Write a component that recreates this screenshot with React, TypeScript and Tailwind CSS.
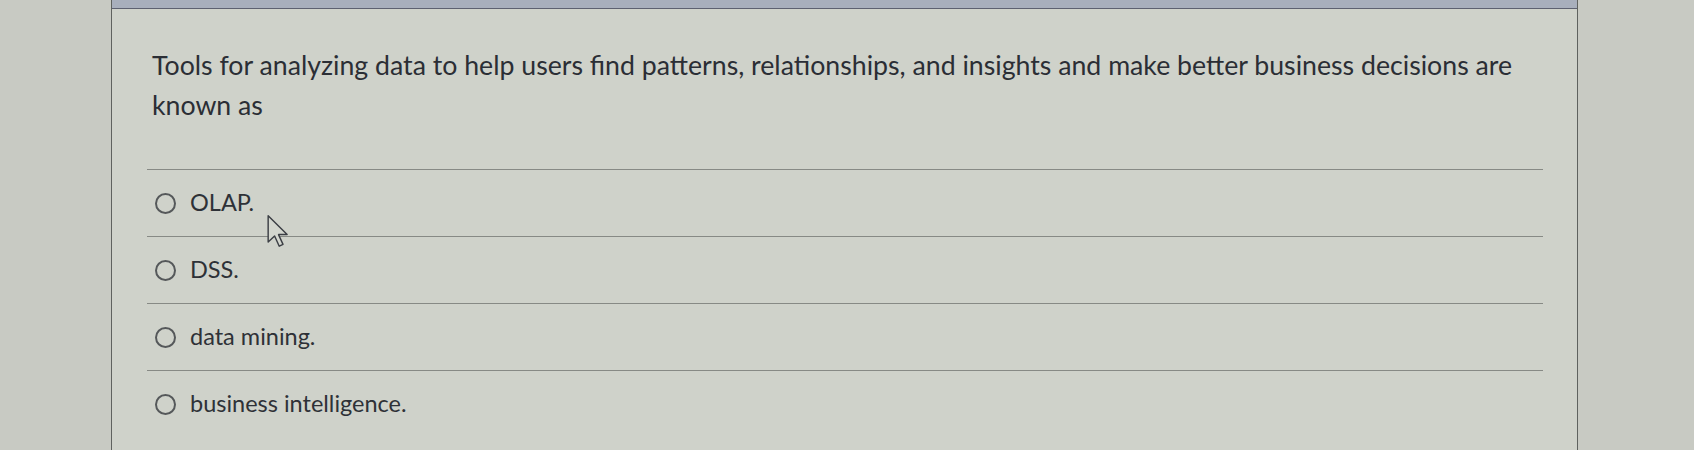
import React from "react";

const options = ["OLAP.", "DSS.", "data mining.", "business intelligence."];

const Cursor: React.FC = () => (
  <svg
    className="pointer-events-none absolute left-[266px] top-[214px]"
    width="24"
    height="34"
    viewBox="0 0 13 19"
    aria-hidden="true"
  >
    <path
      d="M1 1 L1 15.6 L4.6 12.3 L7.2 18 L9.3 17 L6.8 11.5 L11.6 11.5 Z"
      fill="#d3d6ce"
      stroke="#3b3e44"
      strokeWidth="0.8"
      strokeLinejoin="round"
    />
  </svg>
);

const App: React.FC = () => {
  return (
    <div
      className="relative h-[450px] w-full overflow-hidden bg-[#c8cac3] pl-[111px]"
      style={{ fontFamily: "Lato, 'Open Sans', sans-serif" }}
    >
      <div className="flex h-full w-[1467px] flex-col border-x border-[#5f625f] bg-[#cfd2ca]">
        {/* top strip of the quiz frame */}
        <div className="h-[9px] border-b border-[#5d6170] bg-[#a8afbc]" />

        <div className="pl-[40px] pt-[36px]">
          <p className="max-w-[1400px] text-[26.7px] leading-[40px] text-[#2b2e35]">
            Tools for analyzing data to help users find patterns, relationships, and insights and make better
            business decisions are known as
          </p>
        </div>

        <ul className="ml-[35px] mr-[34px] mt-[44px]">
          {options.map((opt) => (
            <li key={opt} className="flex h-[67px] items-center border-t border-[#878a85] pl-[8px]">
              <span className="h-[21px] w-[21px] shrink-0 rounded-full border-2 border-[#55585a]" />
              <span className="ml-[14px] text-[23.5px] text-[#2e3137]">{opt}</span>
            </li>
          ))}
        </ul>
      </div>
      <Cursor />
    </div>
  );
};

export default App;
